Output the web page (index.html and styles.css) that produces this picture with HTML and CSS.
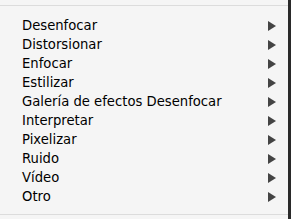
FILE: index.html
```html
<!DOCTYPE html>
<html lang="es">
<head>
    <meta charset="UTF-8">
    <title>Filtros</title>
    <link rel="stylesheet" href="styles.css">
</head>
<body>

<div class="window">
    <ul class="menu">
        <li class="menu-item"><span>Desenfocar</span><i class="arrow"></i></li>
        <li class="menu-item"><span>Distorsionar</span><i class="arrow"></i></li>
        <li class="menu-item"><span>Enfocar</span><i class="arrow"></i></li>
        <li class="menu-item"><span>Estilizar</span><i class="arrow"></i></li>
        <li class="menu-item"><span>Galería de efectos Desenfocar</span><i class="arrow"></i></li>
        <li class="menu-item"><span>Interpretar</span><i class="arrow"></i></li>
        <li class="menu-item"><span>Pixelizar</span><i class="arrow"></i></li>
        <li class="menu-item"><span>Ruido</span><i class="arrow"></i></li>
        <li class="menu-item"><span>Vídeo</span><i class="arrow"></i></li>
        <li class="menu-item"><span>Otro</span><i class="arrow"></i></li>
    </ul>
</div>

</body>
</html>
```

FILE: styles.css
```css
* {
    margin: 0;
    padding: 0;
}

html, body {
    height: 100%;
}

body {
    background: #f5f5f5;
    font-family: "DejaVu Sans", sans-serif;
    font-size: 13.2px;
    color: #000;
}

.window {
    height: 100%;
    box-sizing: border-box;
    padding-top: 5px;
    border-right: 3px solid #2a2a2a;
}

.menu {
    list-style: none;
    border-top: 1px solid #dcdcdc;
    border-bottom: 1px solid #dcdcdc;
    padding: 10px 0 8px 22px;
}

.menu-item {
    display: flex;
    align-items: center;
    justify-content: space-between;
    height: 19px;
    padding-right: 12px;
}

.arrow {
    width: 0;
    height: 0;
    border-top: 5px solid transparent;
    border-bottom: 5px solid transparent;
    border-left: 8px solid #444;
}
```
